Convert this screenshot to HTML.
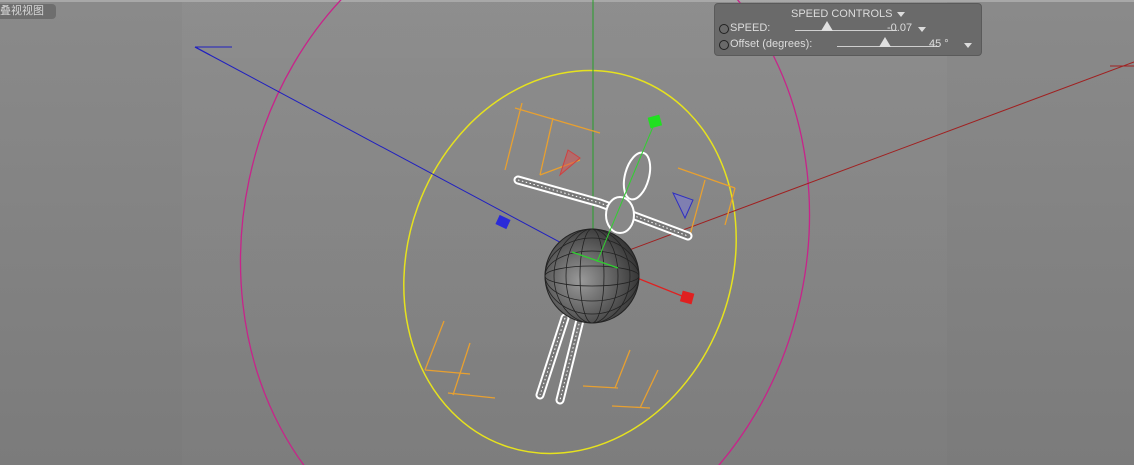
<!DOCTYPE html>
<html><head><meta charset="utf-8"><style>
html,body{margin:0;padding:0;width:1134px;height:465px;overflow:hidden;}
body{background:linear-gradient(#8a8a8a,#7b7b7b);font-family:"Liberation Sans","Noto Sans CJK SC",sans-serif;position:relative;}
.band{position:absolute;top:0;bottom:0;left:182px;width:765px;background:linear-gradient(rgba(255,255,255,0.03),rgba(255,255,255,0.015));}
.top{position:absolute;top:0;left:0;right:0;height:2px;background:#a8a8a8;}
.tab{position:absolute;left:0;top:4px;width:56px;height:15px;background:#6e6e6e;border-radius:0 4px 4px 0;color:#d6d6d6;font-size:11px;line-height:15px;overflow:hidden;white-space:nowrap;}
.panel{position:absolute;left:714px;top:3px;width:266px;height:51px;background:#6a6a6a;border:1px solid #5a5a5a;border-radius:4px;color:#dcdcdc;font-size:11px;white-space:nowrap;}
.panel span{white-space:nowrap;}
.panel .t{position:absolute;left:76px;top:4px;}
.row{position:absolute;left:4px;width:150px;}
.c{position:absolute;width:8px;height:8px;border:1px solid #222;border-radius:50%;}
.ln{position:absolute;height:1px;background:#cfcfcf;}
.tri{position:absolute;width:0;height:0;border-left:6px solid transparent;border-right:6px solid transparent;border-bottom:10px solid #e0e0e0;}
.dd{position:absolute;width:0;height:0;border-left:4px solid transparent;border-right:4px solid transparent;border-top:5px solid #dcdcdc;}
svg{position:absolute;left:0;top:0;}
</style></head><body>
<div class="band"></div><div class="top"></div>
<svg width="1134" height="465" viewBox="0 0 1134 465">
<g fill="none">
<ellipse cx="525" cy="238" rx="282" ry="335" transform="rotate(12 525 238)" stroke="#c8238a" stroke-width="1.3"/>
<ellipse cx="570" cy="262" rx="162" ry="195" transform="rotate(20 570 262)" stroke="#e6e21e" stroke-width="1.5"/>
<line x1="593" y1="0" x2="593" y2="262" stroke="#27a02a"/>
<line x1="195" y1="47" x2="597" y2="262" stroke="#2020c0"/>
<line x1="195" y1="47" x2="232" y2="47" stroke="#2020c0"/>
<line x1="195" y1="47" x2="210" y2="55" stroke="#2020c0"/>
<line x1="597" y1="262" x2="1134" y2="62" stroke="#a02020"/>
<line x1="1110" y1="66" x2="1134" y2="66" stroke="#a02020"/>
<line x1="597" y1="262" x2="687" y2="298" stroke="#e02020" stroke-width="1.3"/>
<g stroke="#e8a030" stroke-width="1.3">
<path d="M522 103 L505 170 M515 108 L600 133 M553 118 L540 175 M540 175 L580 160"/>
<path d="M678 168 L735 188 M705 180 L690 235 M735 188 L725 225"/>
<path d="M444 321 L425 370 M425 370 L470 374 M470 343 L453 395 M448 393 L495 398"/>
<path d="M630 350 L615 388 M583 386 L618 388 M658 370 L640 408 M612 406 L650 408"/>
</g>
<path d="M568 150 L580 158 L560 175 Z" fill="rgba(220,80,80,0.5)" stroke="#d04040"/>
<path d="M673 193 L693 200 L685 218 Z" fill="rgba(120,120,220,0.5)" stroke="#3030c0"/>
<g stroke="#fff" stroke-width="9" stroke-linecap="round">
<path d="M518 180 L600 203 L688 236"/>
<path d="M565 318 L540 395 M580 320 L560 400"/>
</g>
<g stroke="#777" stroke-width="5" stroke-linecap="round">
<path d="M518 180 L600 203 L688 236"/>
<path d="M565 318 L540 395 M580 320 L560 400"/>
</g>
<g stroke="#fff" stroke-width="1" stroke-dasharray="1.5 2.5">
<path d="M518 180 L600 203 L688 236"/>
<path d="M565 318 L540 395 M580 320 L560 400"/>
</g>
<ellipse cx="637" cy="176" rx="12" ry="24" transform="rotate(15 637 176)" fill="#888" stroke="#fff" stroke-width="2"/>
<ellipse cx="620" cy="215" rx="14" ry="18" fill="#888" stroke="#fff" stroke-width="2"/>
</g>
<defs><radialGradient id="sg" cx="0.38" cy="0.55" r="0.7"><stop offset="0" stop-color="#9a9a9a"/><stop offset="0.6" stop-color="#555"/><stop offset="1" stop-color="#2a2a2a"/></radialGradient></defs>
<circle cx="592" cy="276" r="47" fill="url(#sg)" stroke="#222"/>
<g fill="none" stroke="#222" stroke-width="0.8">
<ellipse cx="592" cy="276" rx="47" ry="10"/><ellipse cx="592" cy="276" rx="47" ry="25"/><ellipse cx="592" cy="276" rx="47" ry="38"/>
<ellipse cx="592" cy="276" rx="12" ry="47"/><ellipse cx="592" cy="276" rx="26" ry="47"/><ellipse cx="592" cy="276" rx="38" ry="47"/>
</g>
<line x1="597" y1="262" x2="655" y2="122" stroke="#30d030"/>
<line x1="572" y1="252" x2="618" y2="268" stroke="#30d030" stroke-width="1.3"/>
<rect x="649" y="116" width="12" height="11" fill="#20e020" transform="rotate(-15 655 122)"/>
<rect x="497" y="217" width="12" height="10" fill="#2a2ad8" transform="rotate(25 503 222)"/>
<rect x="681" y="292" width="12" height="11" fill="#e02020" transform="rotate(15 687 298)"/>
</svg>
<div class="tab">叠视视图</div>
<div class="panel">
<div class="t">SPEED CONTROLS</div><div class="dd" style="left:182px;top:8px"></div>
<div class="row" style="top:18px"><div class="c" style="left:0;top:2px"></div><span style="position:absolute;left:11px;top:0">SPEED:</span></div>
<div class="ln" style="left:80px;top:26px;width:102px"></div><div class="tri" style="left:106px;top:17px"></div>
<span style="position:absolute;left:172px;top:18px">-0.07</span><div class="dd" style="left:203px;top:23px"></div>
<div class="row" style="top:34px"><div class="c" style="left:0;top:2px"></div><span style="position:absolute;left:11px;top:0">Offset (degrees):</span></div>
<div class="ln" style="left:122px;top:42px;width:102px"></div><div class="tri" style="left:164px;top:33px"></div>
<span style="position:absolute;left:214px;top:34px">45 °</span><div class="dd" style="left:249px;top:39px"></div>
</div>
</body></html>
